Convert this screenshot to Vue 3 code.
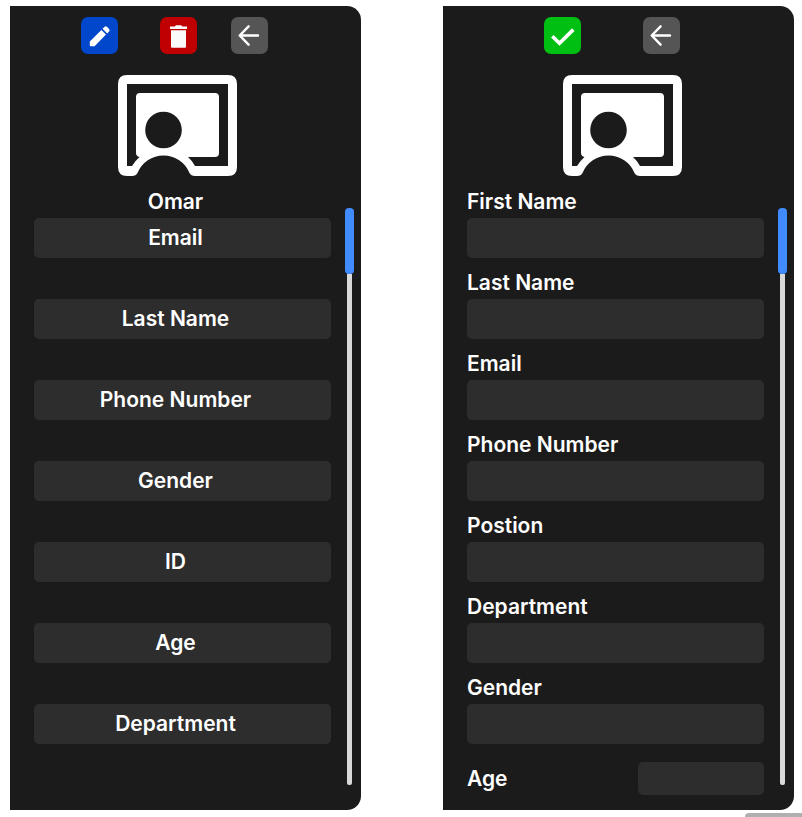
<script setup>
const details = ['Email', 'Last Name', 'Phone Number', 'Gender', 'ID', 'Age', 'Department']
const fields = [
  { id: 'first-name', label: 'First Name', type: 'text' },
  { id: 'last-name', label: 'Last Name', type: 'text' },
  { id: 'email', label: 'Email', type: 'email' },
  { id: 'phone', label: 'Phone Number', type: 'tel' },
  { id: 'position', label: 'Postion', type: 'text' },
  { id: 'department', label: 'Department', type: 'text' },
  { id: 'gender', label: 'Gender', type: 'text' },
]
</script>

<template>
  <main class="page">
    <div class="panels">
      <section class="panel">
        <div class="toolbar toolbar-view">
          <button type="button" class="tool edit" aria-label="Edit">
            <svg viewBox="0 0 37 37" fill="#fff">
              <path d="M8.800 24.400 20.400 13 25 17.600 13.600 29.300H9.600Q8.800 29.300 8.800 28.500Z" />
              <path d="M21.500 11.800 23.400 10Q24.800 8.700 26.200 10L28.100 11.900Q29.300 13.200 28.100 14.500L26.200 16.400Z" />
            </svg>
          </button>
          <button type="button" class="tool delete" aria-label="Delete">
            <svg viewBox="0 0 37 37" fill="#fafafa">
              <path d="M10 9.500H14.800L16 8.300H21.200L22.400 9.500H27V12H10ZM11 13.200H26V29.700Q26 30.700 25 30.700H12Q11 30.700 11 29.700Z" />
            </svg>
          </button>
          <button type="button" class="tool back" aria-label="Back">
            <svg viewBox="0 0 37 37" fill="none" stroke="#fff" stroke-width="2.400" stroke-linecap="round" stroke-linejoin="round">
              <path d="M27 18.500H9M17.600 9.300 8.700 18.500 17.600 27.700" />
            </svg>
          </button>
        </div>
        <div class="portrait portrait-view">
          <svg class="avatar" viewBox="0 0 119 101" aria-hidden="true">
            <path fill="#fff" fill-rule="evenodd" d="M9 0H110Q119 0 119 9V92Q119 101 110 101H77Q73 101 71.500 98A28 28 0 0 0 19.500 98Q18 101 14 101H9Q0 101 0 92V9Q0 0 9 0ZM9 9V91H14Q17 86 21.500 82Q18 81 18 78V22Q18 18 22 18H97Q101 18 101 22V78Q101 82 97 82H70Q74.500 86 77 91H110V9Z" />
            <circle cx="45.500" cy="55" r="18.300" fill="#1b1b1b" />
          </svg>
        </div>
        <div class="body">
          <div class="content">
            <h2 class="name">Omar</h2>
            <ul class="details">
              <li v-for="item in details" :key="item" class="detail">{{ item }}</li>
            </ul>
          </div>
          <div class="rail"><div class="thumb"></div><div class="track"></div></div>
        </div>
      </section>

      <section class="panel">
        <div class="toolbar toolbar-form">
          <button type="submit" form="person-form" class="tool save" aria-label="Save">
            <svg viewBox="0 0 37 37" fill="none" stroke="#fff" stroke-width="3.600">
              <path d="M8.300 19.300 15.500 26.200 29.300 12.600" />
            </svg>
          </button>
          <button type="button" class="tool back" aria-label="Back">
            <svg viewBox="0 0 37 37" fill="none" stroke="#fff" stroke-width="2.400" stroke-linecap="round" stroke-linejoin="round">
              <path d="M27 18.500H9M17.600 9.300 8.700 18.500 17.600 27.700" />
            </svg>
          </button>
        </div>
        <div class="portrait portrait-form">
          <svg class="avatar" viewBox="0 0 119 101" aria-hidden="true">
            <path fill="#fff" fill-rule="evenodd" d="M9 0H110Q119 0 119 9V92Q119 101 110 101H77Q73 101 71.500 98A28 28 0 0 0 19.500 98Q18 101 14 101H9Q0 101 0 92V9Q0 0 9 0ZM9 9V91H14Q17 86 21.500 82Q18 81 18 78V22Q18 18 22 18H97Q101 18 101 22V78Q101 82 97 82H70Q74.500 86 77 91H110V9Z" />
            <circle cx="45.500" cy="55" r="18.300" fill="#1b1b1b" />
          </svg>
        </div>
        <div class="body">
          <form id="person-form" class="content form" @submit.prevent>
            <div v-for="field in fields" :key="field.id" class="field">
              <label :for="field.id">{{ field.label }}</label>
              <input :id="field.id" :type="field.type" />
            </div>
            <div class="field-inline">
              <label for="age">Age</label>
              <input id="age" type="text" inputmode="numeric" />
            </div>
          </form>
          <div class="rail"><div class="thumb"></div><div class="track"></div></div>
        </div>
      </section>
    </div>
    <div class="tab"></div>
  </main>
</template>

<style>
body {
  margin: 0;
  background: #fff;
}
</style>

<style scoped>
.page {
  display: flex;
  flex-direction: column;
  gap: 3px;
  padding-top: 6px;
  font-family: Inter, "Liberation Sans", sans-serif;
  font-size: 21px;
  line-height: 24px;
  font-weight: 600;
  color: #fff;
}
.panels {
  display: flex;
  gap: 82px;
  padding: 0 8px 0 10px;
}
.panel {
  flex: 1;
  min-width: 0;
  display: flex;
  flex-direction: column;
  box-sizing: border-box;
  padding: 11px 0 15px;
  background: #1b1b1b;
  border-radius: 0 14px 14px 0;
}
.toolbar {
  display: flex;
  justify-content: center;
}
.toolbar-view {
  gap: 34px;
  padding-right: 22px;
}
.toolbar-form {
  gap: 62px;
  padding-right: 14px;
}
.tool {
  width: 37px;
  height: 37px;
  padding: 0;
  border: 0;
  border-radius: 7px;
  cursor: pointer;
}
.tool svg {
  display: block;
  width: 37px;
  height: 37px;
}
.edit {
  margin-right: 8px;
  background: #0047cc;
}
.delete {
  background: #c00000;
}
.back {
  background: #555;
}
.save {
  background: #00bf13;
}
.portrait {
  display: flex;
  justify-content: center;
  margin: 21px 0 14px;
}
.portrait-view {
  padding-right: 16px;
}
.portrait-form {
  padding-left: 8px;
}
.avatar {
  width: 119px;
  height: 101px;
}
.body {
  flex: 1;
  display: flex;
  gap: 14px;
  padding: 0 7px 0 24px;
}
.content {
  flex: 1;
  min-width: 0;
}
.name {
  margin: 0 0 4px;
  padding-right: 14px;
  font-size: 21px;
  font-weight: 600;
  text-align: center;
}
.details {
  display: flex;
  flex-direction: column;
  gap: 41px;
  margin: 0;
  padding: 0;
  list-style: none;
}
.detail {
  padding: 8px 14px 8px 0;
  background: #2d2d2d;
  border-radius: 5px;
  text-align: center;
}
.form {
  display: flex;
  flex-direction: column;
  gap: 13px;
}
.field {
  display: flex;
  flex-direction: column;
  gap: 4px;
}
input {
  box-sizing: border-box;
  width: 100%;
  height: 40px;
  padding: 0 12px;
  border: 0;
  border-radius: 5px;
  background: #2d2d2d;
  color: #fff;
  font: inherit;
}
.field-inline {
  display: flex;
  align-items: center;
  justify-content: space-between;
  margin-top: 5px;
}
.field-inline input {
  width: 126px;
  height: 33px;
}
.rail {
  display: flex;
  flex-direction: column;
  align-items: center;
  width: 9px;
  margin: 18px 0 10px;
}
.thumb {
  width: 9px;
  height: 66px;
  border-radius: 4px;
  background: #408cff;
}
.track {
  flex: 1;
  width: 5px;
  border-radius: 0 0 2px 2px;
  background: #d9d9d9;
}
.tab {
  align-self: flex-end;
  width: 57px;
  height: 4px;
  border-radius: 4px 0 0 0;
  background: #b0b0b0;
}
</style>
